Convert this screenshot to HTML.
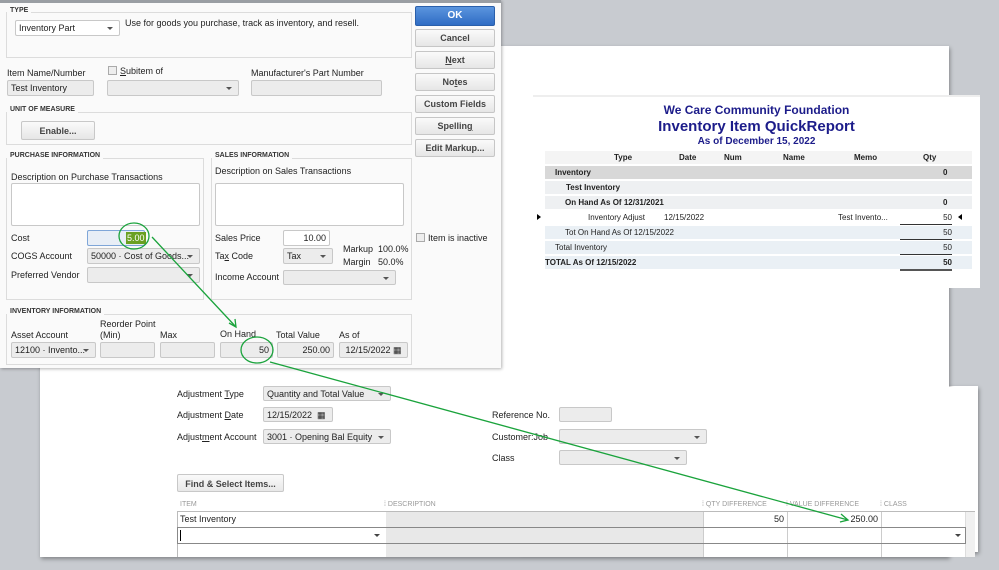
<!DOCTYPE html>
<html><head><meta charset="utf-8"><style>
*{margin:0;padding:0;box-sizing:border-box}
body{width:999px;height:570px;background:#c8cbd0;position:relative;overflow:hidden;font-family:"Liberation Sans",Arial,sans-serif;font-size:9px;color:#222}
.a{position:absolute;white-space:nowrap}
.win{position:absolute;background:#fff;box-shadow:1px 2px 4px rgba(0,0,0,.35)}
.lbl{position:absolute;font-size:7px;font-weight:bold;color:#333;background:#fafafa;padding:0 3px;white-space:nowrap}
.pan{position:absolute;border:1px solid #dcdcdc}
.in{position:absolute;background:#ececec;border:1px solid #c8c8c8;border-radius:2px;font-size:9px;padding:2px 3px;white-space:nowrap;overflow:hidden;line-height:10px}
.w{background:#fff}
.dd::after{content:"";position:absolute;right:6px;top:6px;border:3px solid transparent;border-top:3px solid #555}
.btn{position:absolute;left:415px;width:80px;background:linear-gradient(#fafafa,#e6e6e6);border:1px solid #c6c6c6;border-radius:2px;text-align:center;font-size:9px;font-weight:bold;color:#444}
.r{position:absolute;left:545px;width:427px;height:13px;font-size:8px;line-height:13px}
.hd{position:absolute;font-size:7px;color:#999}
</style></head><body>

<!-- big adjustment window -->
<div class="win" style="left:520px;top:386px;width:458px;height:166px"></div>
<div class="win" style="left:40px;top:46px;width:909px;height:511px"></div>
<div class="a" style="left:520px;top:387px;width:458px;height:164px;background:#fff"></div>

<!-- report window -->
<div class="win" style="left:533px;top:95px;width:447px;height:193px;box-shadow:none;border-top:2px solid #eee"></div>
<div class="a" style="left:533px;top:103px;width:447px;text-align:center;font-size:12px;font-weight:bold;color:#1c1c8a">We Care Community Foundation</div>
<div class="a" style="left:533px;top:118px;width:447px;text-align:center;font-size:15px;font-weight:bold;color:#1c1c8a">Inventory Item QuickReport</div>
<div class="a" style="left:533px;top:136px;width:447px;text-align:center;font-size:10px;font-weight:bold;color:#1c1c8a">As of December 15, 2022</div>
<div class="r" style="top:151px;background:#f4f4f4;font-weight:bold"><span class="a" style="left:69px">Type</span><span class="a" style="left:134px">Date</span><span class="a" style="left:179px">Num</span><span class="a" style="left:238px">Name</span><span class="a" style="left:309px">Memo</span><span class="a" style="left:378px">Qty</span></div>
<div class="r" style="top:166px;background:#d8d8d8;font-weight:bold"><span class="a" style="left:10px">Inventory</span><span class="a" style="left:398px">0</span></div>
<div class="r" style="top:181px;background:#eef0f2;font-weight:bold"><span class="a" style="left:21px">Test Inventory</span></div>
<div class="r" style="top:196px;background:#eef0f2;font-weight:bold"><span class="a" style="left:20px">On Hand As Of 12/31/2021</span><span class="a" style="left:398px">0</span></div>
<div class="a" style="left:537px;top:214px;border:3px solid transparent;border-left:4px solid #000"></div>
<div class="r" style="top:211px;background:#fff"><span class="a" style="left:43px">Inventory Adjust</span><span class="a" style="left:119px">12/15/2022</span><span class="a" style="left:293px">Test Invento...</span><span class="a" style="left:355px;width:52px;text-align:right;border-bottom:1px solid #333">50</span></div>
<div class="a" style="left:955px;top:214px;border:3px solid transparent;border-right:4px solid #000"></div>
<div class="r" style="top:226px;background:#eaf0f5"><span class="a" style="left:20px">Tot On Hand As Of 12/15/2022</span><span class="a" style="left:355px;width:52px;text-align:right;border-bottom:1px solid #333">50</span></div>
<div class="r" style="top:241px;background:#eaf0f5"><span class="a" style="left:10px">Total Inventory</span><span class="a" style="left:355px;width:52px;text-align:right;border-bottom:1px solid #333">50</span></div>
<div class="r" style="top:256px;background:#eaf0f5;font-weight:bold"><span class="a" style="left:0">TOTAL As Of 12/15/2022</span><span class="a" style="left:355px;width:52px;text-align:right;border-bottom:2px solid #555">50</span></div>

<!-- adjustment form -->
<div class="a" style="left:177px;top:389px">Adjustment <u>T</u>ype</div>
<div class="in dd" style="left:263px;top:386px;width:128px;height:15px">Quantity and Total Value</div>
<div class="a" style="left:177px;top:410px">Adjustment <u>D</u>ate</div>
<div class="in" style="left:263px;top:407px;width:70px;height:15px">12/15/2022 &nbsp;▦</div>
<div class="a" style="left:177px;top:432px">Adjust<u>m</u>ent Account</div>
<div class="in dd" style="left:263px;top:429px;width:128px;height:15px">3001 · Opening Bal Equity</div>
<div class="a" style="left:492px;top:410px">Reference No.</div>
<div class="in" style="left:559px;top:407px;width:53px;height:15px"></div>
<div class="a" style="left:492px;top:432px">Customer:Job</div>
<div class="in dd" style="left:559px;top:429px;width:148px;height:15px"></div>
<div class="a" style="left:492px;top:453px">Class</div>
<div class="in dd" style="left:559px;top:450px;width:128px;height:15px"></div>
<div class="in" style="left:177px;top:474px;width:107px;height:18px;background:linear-gradient(#fafafa,#e8e8e8);font-weight:bold;color:#444;padding-top:4px;text-align:center">Find &amp; Select Items...</div>
<div class="hd" style="left:180px;top:501px">ITEM</div>
<div class="hd" style="left:384px;top:501px">⁞ DESCRIPTION</div>
<div class="hd" style="left:702px;top:501px">⁞ QTY DIFFERENCE</div>
<div class="hd" style="left:786px;top:501px">⁞ VALUE DIFFERENCE</div>
<div class="hd" style="left:880px;top:501px">⁞ CLASS</div>
<div class="a" style="left:177px;top:511px;width:798px;height:46px;border:1px solid #bbb;border-bottom:none;background:#fff"></div>
<div class="a" style="left:386px;top:512px;width:317px;height:45px;background:#e8e8e8"></div>
<div class="a" style="left:703px;top:512px;width:1px;height:45px;background:#ccc"></div>
<div class="a" style="left:787px;top:512px;width:1px;height:45px;background:#ccc"></div>
<div class="a" style="left:881px;top:512px;width:1px;height:45px;background:#ccc"></div>
<div class="a" style="left:965px;top:512px;width:10px;height:45px;background:#f0f0f0;border-left:1px solid #ddd"></div>
<div class="a" style="left:180px;top:514px">Test Inventory</div>
<div class="a" style="left:703px;top:514px;width:81px;text-align:right">50</div>
<div class="a" style="left:787px;top:514px;width:91px;text-align:right">250.00</div>
<div class="a" style="left:177px;top:527px;width:789px;height:17px;border:1px solid #888"></div>
<div class="a" style="left:180px;top:530px;width:1px;height:11px;background:#000"></div>
<div class="a" style="left:374px;top:534px;border:3px solid transparent;border-top:3px solid #444"></div>
<div class="a" style="left:955px;top:534px;border:3px solid transparent;border-top:3px solid #444"></div>

<!-- item dialog -->
<div class="a" style="left:0;top:0;width:501px;height:368px;background:#fafafa;border-top:3px solid #9a9ea3;box-shadow:1px 1px 3px rgba(0,0,0,.3)"></div>
<div class="pan" style="left:6px;top:12px;width:406px;height:46px"></div><div class="lbl" style="left:7px;top:7px">TYPE</div>
<div class="in dd w" style="left:15px;top:20px;width:105px;height:16px">Inventory Part</div>
<div class="a" style="left:125px;top:18px">Use for goods you purchase, track as inventory, and resell.</div>
<div class="a" style="left:7px;top:68px">Item Name/Number</div>
<div class="in" style="left:7px;top:80px;width:87px;height:16px">Test Inventory</div>
<div class="a" style="left:108px;top:66px;width:9px;height:9px;border:1px solid #aaa;background:#eee"></div>
<div class="a" style="left:120px;top:66px"><u>S</u>ubitem of</div>
<div class="in dd" style="left:107px;top:80px;width:132px;height:16px"></div>
<div class="a" style="left:251px;top:68px">Manufacturer's Part Number</div>
<div class="in" style="left:251px;top:80px;width:131px;height:16px"></div>
<div class="pan" style="left:6px;top:112px;width:406px;height:33px"></div><div class="lbl" style="left:7px;top:106px">UNIT OF MEASURE</div>
<div class="in" style="left:21px;top:121px;width:74px;height:19px;background:linear-gradient(#fafafa,#e6e6e6);font-weight:bold;color:#444;text-align:center;padding-top:4px">Enable...</div>
<div class="pan" style="left:6px;top:158px;width:198px;height:142px"></div><div class="lbl" style="left:7px;top:152px">PURCHASE INFORMATION</div>
<div class="pan" style="left:211px;top:158px;width:201px;height:142px"></div><div class="lbl" style="left:212px;top:152px">SALES INFORMATION</div>
<div class="a" style="left:11px;top:172px">Description on Purchase Transactions</div>
<div class="in w" style="left:11px;top:183px;width:189px;height:43px"></div>
<div class="a" style="left:215px;top:166px">Description on Sales Transactions</div>
<div class="in w" style="left:215px;top:183px;width:189px;height:43px"></div>
<div class="a" style="left:11px;top:233px">Cost</div>
<div class="in" style="left:87px;top:230px;width:58px;height:16px;background:#e8eef6;border-color:#7fa6d8"></div>
<div class="a" style="left:126px;top:232px;background:#6aa022;color:#fff;padding:0 1px;line-height:12px">5.00</div>
<div class="a" style="left:11px;top:251px">COGS Account</div>
<div class="in dd" style="left:87px;top:248px;width:113px;height:16px">50000 · Cost of Goods...</div>
<div class="a" style="left:11px;top:270px">Preferred Vendor</div>
<div class="in dd" style="left:87px;top:267px;width:113px;height:16px"></div>
<div class="a" style="left:215px;top:233px">Sales Price</div>
<div class="in w" style="left:283px;top:230px;width:47px;height:16px;text-align:right">10.00</div>
<div class="a" style="left:215px;top:251px">Ta<u>x</u> Code</div>
<div class="in dd" style="left:283px;top:248px;width:50px;height:16px">Tax</div>
<div class="a" style="left:343px;top:244px">Markup &nbsp;100.0%</div>
<div class="a" style="left:343px;top:257px">Margin &nbsp; 50.0%</div>
<div class="a" style="left:215px;top:272px">Income Account</div>
<div class="in dd" style="left:283px;top:270px;width:113px;height:15px"></div>
<div class="a" style="left:416px;top:233px;width:9px;height:9px;border:1px solid #aaa;background:#eee"></div>
<div class="a" style="left:428px;top:233px">Item is inactive</div>
<div class="pan" style="left:6px;top:314px;width:406px;height:51px"></div><div class="lbl" style="left:7px;top:308px">INVENTORY INFORMATION</div>
<div class="a" style="left:100px;top:319px">Reorder Point</div>
<div class="a" style="left:100px;top:330px">(Min)</div>
<div class="a" style="left:11px;top:330px">Asset Account</div>
<div class="a" style="left:160px;top:330px">Max</div>
<div class="a" style="left:220px;top:329px">On Hand</div>
<div class="a" style="left:276px;top:330px">Total Value</div>
<div class="a" style="left:339px;top:330px">As of</div>
<div class="in dd" style="left:11px;top:342px;width:85px;height:16px">12100 · Invento...</div>
<div class="in" style="left:100px;top:342px;width:55px;height:16px"></div>
<div class="in" style="left:160px;top:342px;width:55px;height:16px"></div>
<div class="in" style="left:220px;top:342px;width:53px;height:16px;text-align:right">50</div>
<div class="in" style="left:277px;top:342px;width:57px;height:16px;text-align:right">250.00</div>
<div class="in" style="left:339px;top:342px;width:69px;height:16px">&nbsp;12/15/2022 ▦</div>
<div class="btn" style="top:6px;height:20px;background:linear-gradient(#5b95de,#2f6cc4);border-color:#2a5faa;color:#fff;line-height:18px;font-size:10px">OK</div>
<div class="btn" style="top:29px;height:18px;line-height:16px">Cancel</div>
<div class="btn" style="top:51px;height:18px;line-height:16px"><u>N</u>ext</div>
<div class="btn" style="top:73px;height:18px;line-height:16px">No<u>t</u>es</div>
<div class="btn" style="top:95px;height:18px;line-height:16px">Custom Fields</div>
<div class="btn" style="top:117px;height:18px;line-height:16px">Spellin<u>g</u></div>
<div class="btn" style="top:139px;height:18px;line-height:16px">Edit Markup...</div>

<!-- annotations -->
<svg class="a" style="left:0;top:0" width="999" height="570">
<g fill="none" stroke="#1aa33c" stroke-width="1.3">
<ellipse cx="134" cy="236" rx="15" ry="13"/>
<ellipse cx="257" cy="350" rx="16" ry="13"/>
<line x1="152" y1="237" x2="236" y2="327"/>
<polyline points="229,323 236,327 235,319"/>
<line x1="270" y1="362" x2="848" y2="520"/>
<polyline points="841,514 848,520 840,522"/>
</g></svg>
</body></html>
